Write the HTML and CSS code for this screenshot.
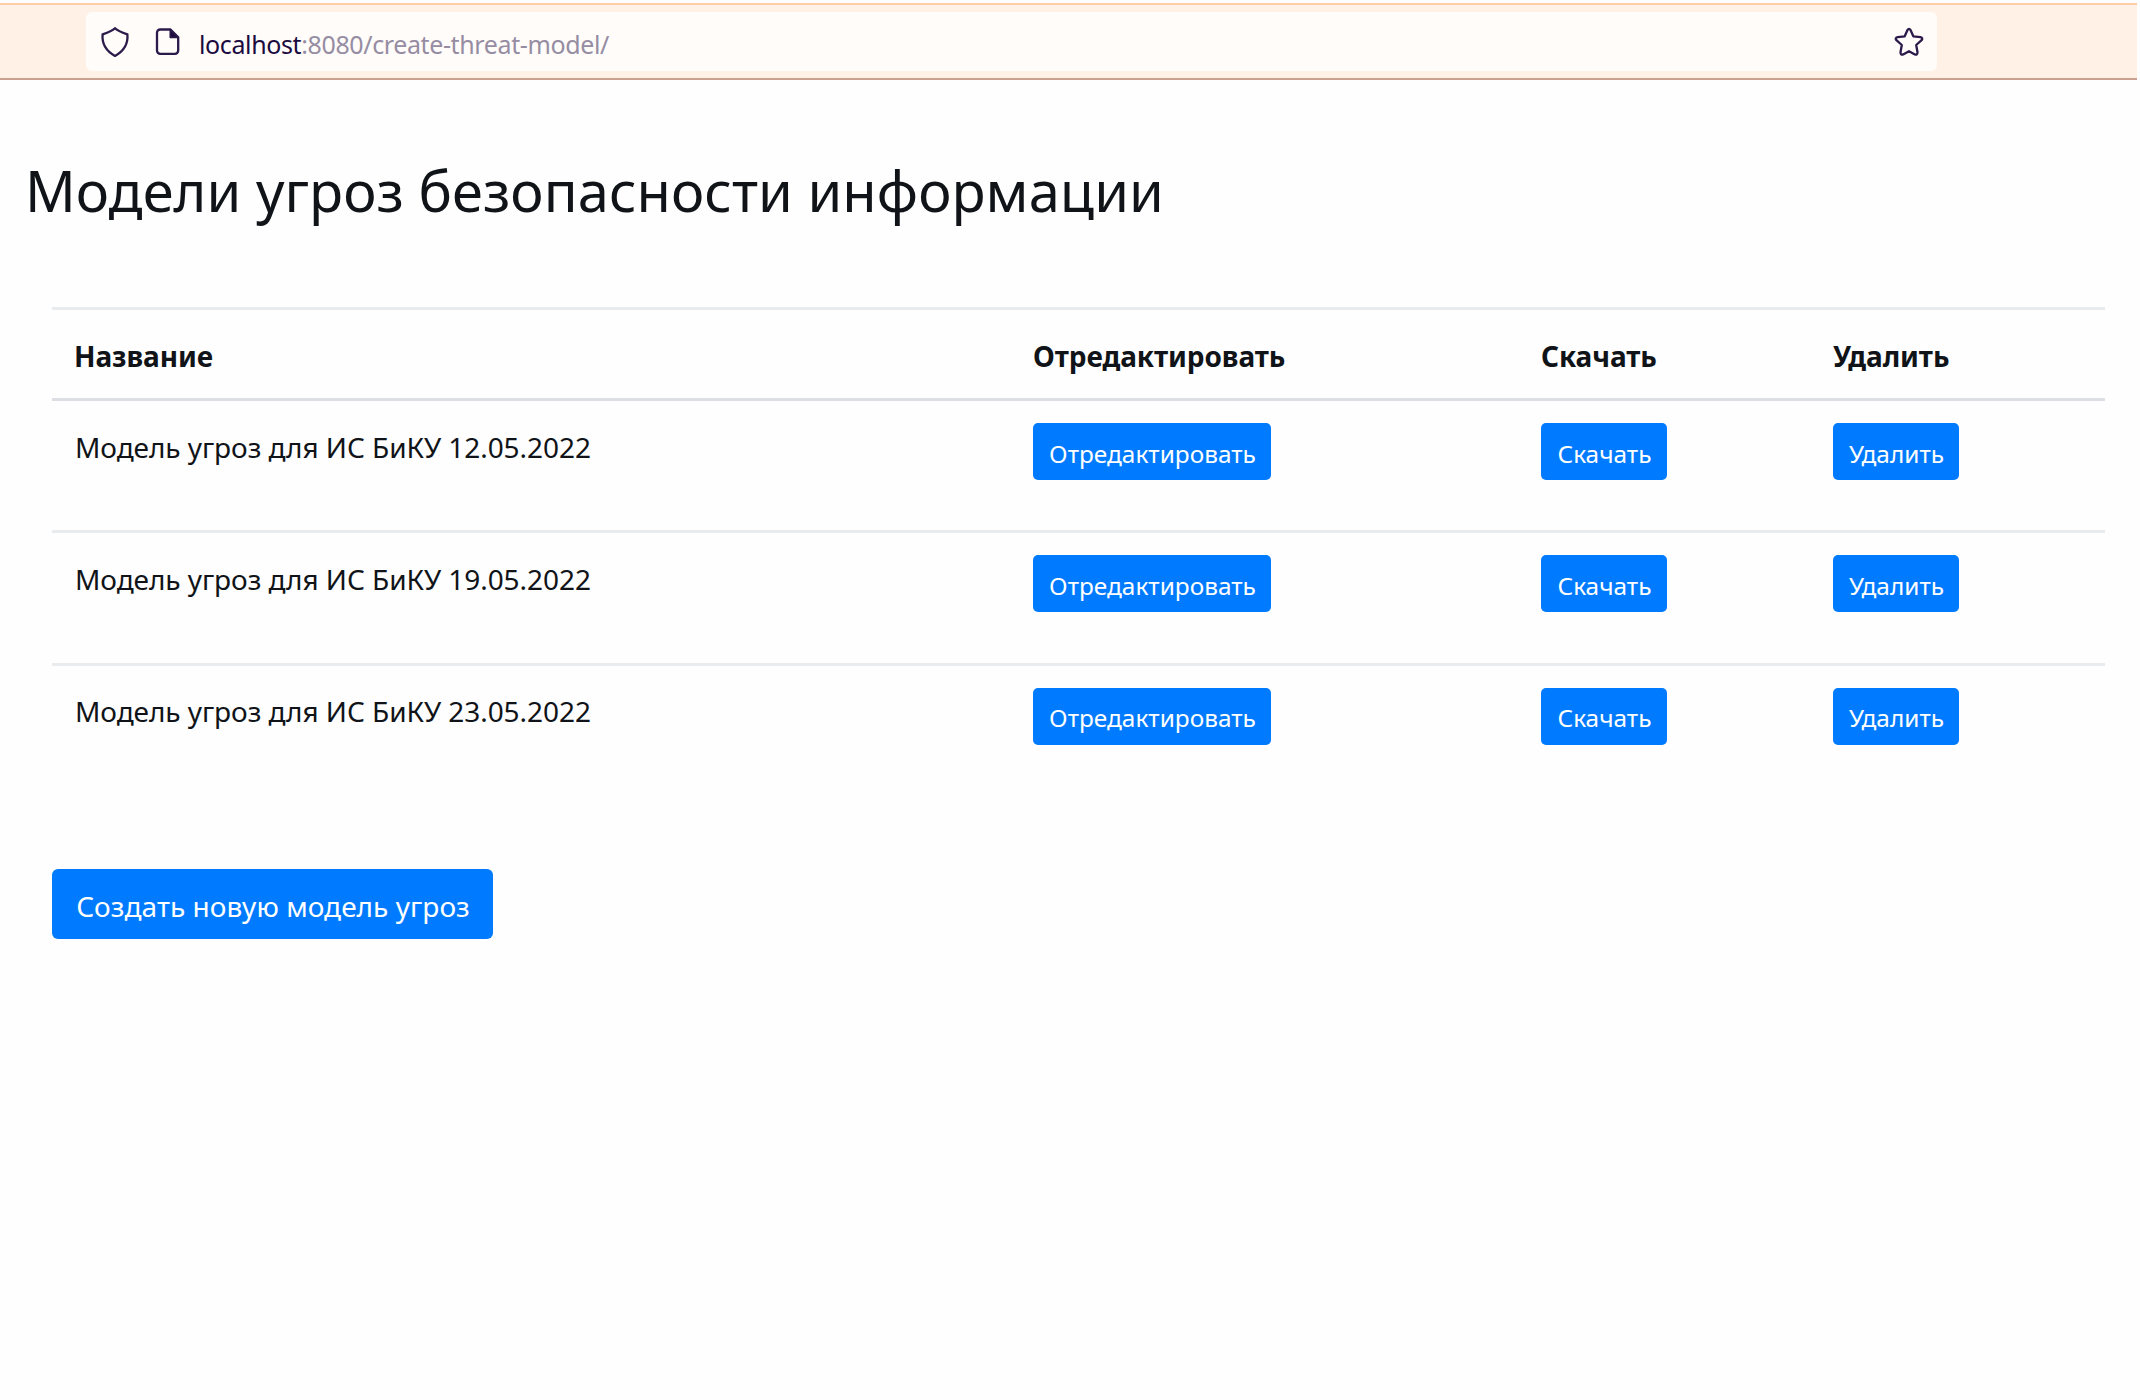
FILE: index.html
```html
<!DOCTYPE html>
<html lang="ru">
<head>
<meta charset="utf-8">
<title>Модели угроз безопасности информации</title>
<link rel="stylesheet" href="styles.css">
</head>
<body>
<header class="toolbar">
  <div class="address">
    <svg class="icon shield" viewBox="0 0 30 32" width="30" height="32">
      <path d="M15 2.2 Q17.6 4.9 27.4 8.4 Q28.6 22.5 15 29.9 Q1.4 22.5 2.6 8.4 Q12.4 4.9 15 2.2Z"/>
    </svg>
    <svg class="icon file" viewBox="0 0 26 30" width="26" height="30">
      <path d="M5.2 2.5H15.5L23.2 10.2V23.6a3.2 3.2 0 0 1-3.2 3.2H5.2A3.2 3.2 0 0 1 2 23.6V5.7A3.2 3.2 0 0 1 5.2 2.5Z"/>
      <path class="solid" d="M15.2 2.5V10.4H23.2Z"/>
    </svg>
    <div class="url"><span class="host">localhost</span>:8080/create-threat-model/</div>
    <svg class="icon star" viewBox="0 0 32 32" width="32" height="32">
      <path d="M14.5 4Q16 1.8 17.5 4L20.3 10.3L27.4 11.2Q30.4 12 28.6 14.2L23.2 19L24.5 26.3Q24.4 29.4 21.9 28.4L16 25.2L10.1 28.4Q7.6 29.4 7.5 26.3L8.8 19L3.4 14.2Q1.6 12 4.6 11.2L11.7 10.3Z"/>
    </svg>
  </div>
</header>
<main>
  <h1>Модели угроз безопасности информации</h1>
  <table class="models">
    <colgroup><col class="c-name"><col class="c-edit"><col class="c-load"><col class="c-del"></colgroup>
    <thead>
      <tr><th>Название</th><th>Отредактировать</th><th>Скачать</th><th>Удалить</th></tr>
    </thead>
    <tbody>
      <tr>
        <td class="name">Модель угроз для ИС БиКУ 12.05.2022</td>
        <td><a class="btn wide">Отредактировать</a></td>
        <td><a class="btn">Скачать</a></td>
        <td><a class="btn">Удалить</a></td>
      </tr>
      <tr>
        <td class="name">Модель угроз для ИС БиКУ 19.05.2022</td>
        <td><a class="btn wide">Отредактировать</a></td>
        <td><a class="btn">Скачать</a></td>
        <td><a class="btn">Удалить</a></td>
      </tr>
      <tr>
        <td class="name">Модель угроз для ИС БиКУ 23.05.2022</td>
        <td><a class="btn wide">Отредактировать</a></td>
        <td><a class="btn">Скачать</a></td>
        <td><a class="btn">Удалить</a></td>
      </tr>
    </tbody>
  </table>
  <a class="btn create">Создать новую модель угроз</a>
</main>
</body>
</html>
```

FILE: styles.css
```css
* { box-sizing: border-box; }

body {
  margin: 0;
  background: #fefefe;
  color: #101418;
  font-family: "Noto Sans", "Open Sans", sans-serif;
  font-size: 28px;
  line-height: 43px;
}

/* browser toolbar */
.toolbar {
  width: 2137px;
  height: 77px;
  margin-top: 3px;
  padding: 7px 0 0 86px;
  border-top: 2px solid #fdcda6;
  border-bottom: 2px solid #c9a191;
  background: #fff1e6;
}

.address {
  display: flex;
  align-items: flex-start;
  width: 1851px;
  height: 59px;
  padding: 13px 12px 0 14px;
  border-radius: 6px;
  background: #fffcfa;
}

.icon {
  flex: none;
  margin-top: 1px;
  fill: none;
  stroke: #2b1a4a;
  stroke-width: 2.3;
  stroke-linejoin: round;
}

.icon .solid { fill: #1f0d40; stroke-width: 1.5; }
.file { margin-left: 25px; margin-top: 2px; }

.url {
  flex: 1;
  margin-left: 18px;
  font-size: 25px;
  line-height: 38px;
  letter-spacing: -0.38px;
  color: #968da3;
}

.host { color: #1c0b3f; }

/* page */
h1 {
  margin: 68px 0 0 25px;
  font-size: 56px;
  font-weight: 400;
  line-height: 84px;
  letter-spacing: 0.06px;
}

.models {
  width: 2053px;
  margin: 75px 0 0 52px;
  border-spacing: 0;
  table-layout: fixed;
}

.c-name { width: 959px; }
.c-edit { width: 508px; }
.c-load { width: 292px; }
.c-del { width: 294px; }

th {
  height: 94px;
  padding: 25px 22px 0;
  border-top: 3px solid #e9ecef;
  border-bottom: 3px solid #dce0e5;
  font-weight: 700;
  letter-spacing: -0.08px;
  text-align: left;
  vertical-align: top;
}

td {
  height: 133px;
  padding: 22px 22px 0;
  border-top: 3px solid #e9ecef;
  vertical-align: top;
}

tr:first-child td { height: 129px; border-top: 0; }

.name {
  padding-top: 25px;
  padding-left: 23px;
  letter-spacing: -0.06px;
}

tr:last-child .name { padding-top: 24px; }

.btn {
  display: flex;
  justify-content: center;
  align-items: center;
  width: 126px;
  height: 57px;
  padding-top: 3px;
  padding-left: 1px;
  border-radius: 5px;
  background: #007bff;
  color: #fff;
  font-size: 24.4px;
  line-height: 37px;
  white-space: nowrap;
}

.wide { width: 238px; }

tr:last-child .btn { padding-top: 1px; }

.create {
  width: 441px;
  height: 70px;
  margin: 73px 0 0 52px;
  padding-top: 4px;
  border-radius: 6px;
  font-size: 28px;
  letter-spacing: 0.05px;
}
```
